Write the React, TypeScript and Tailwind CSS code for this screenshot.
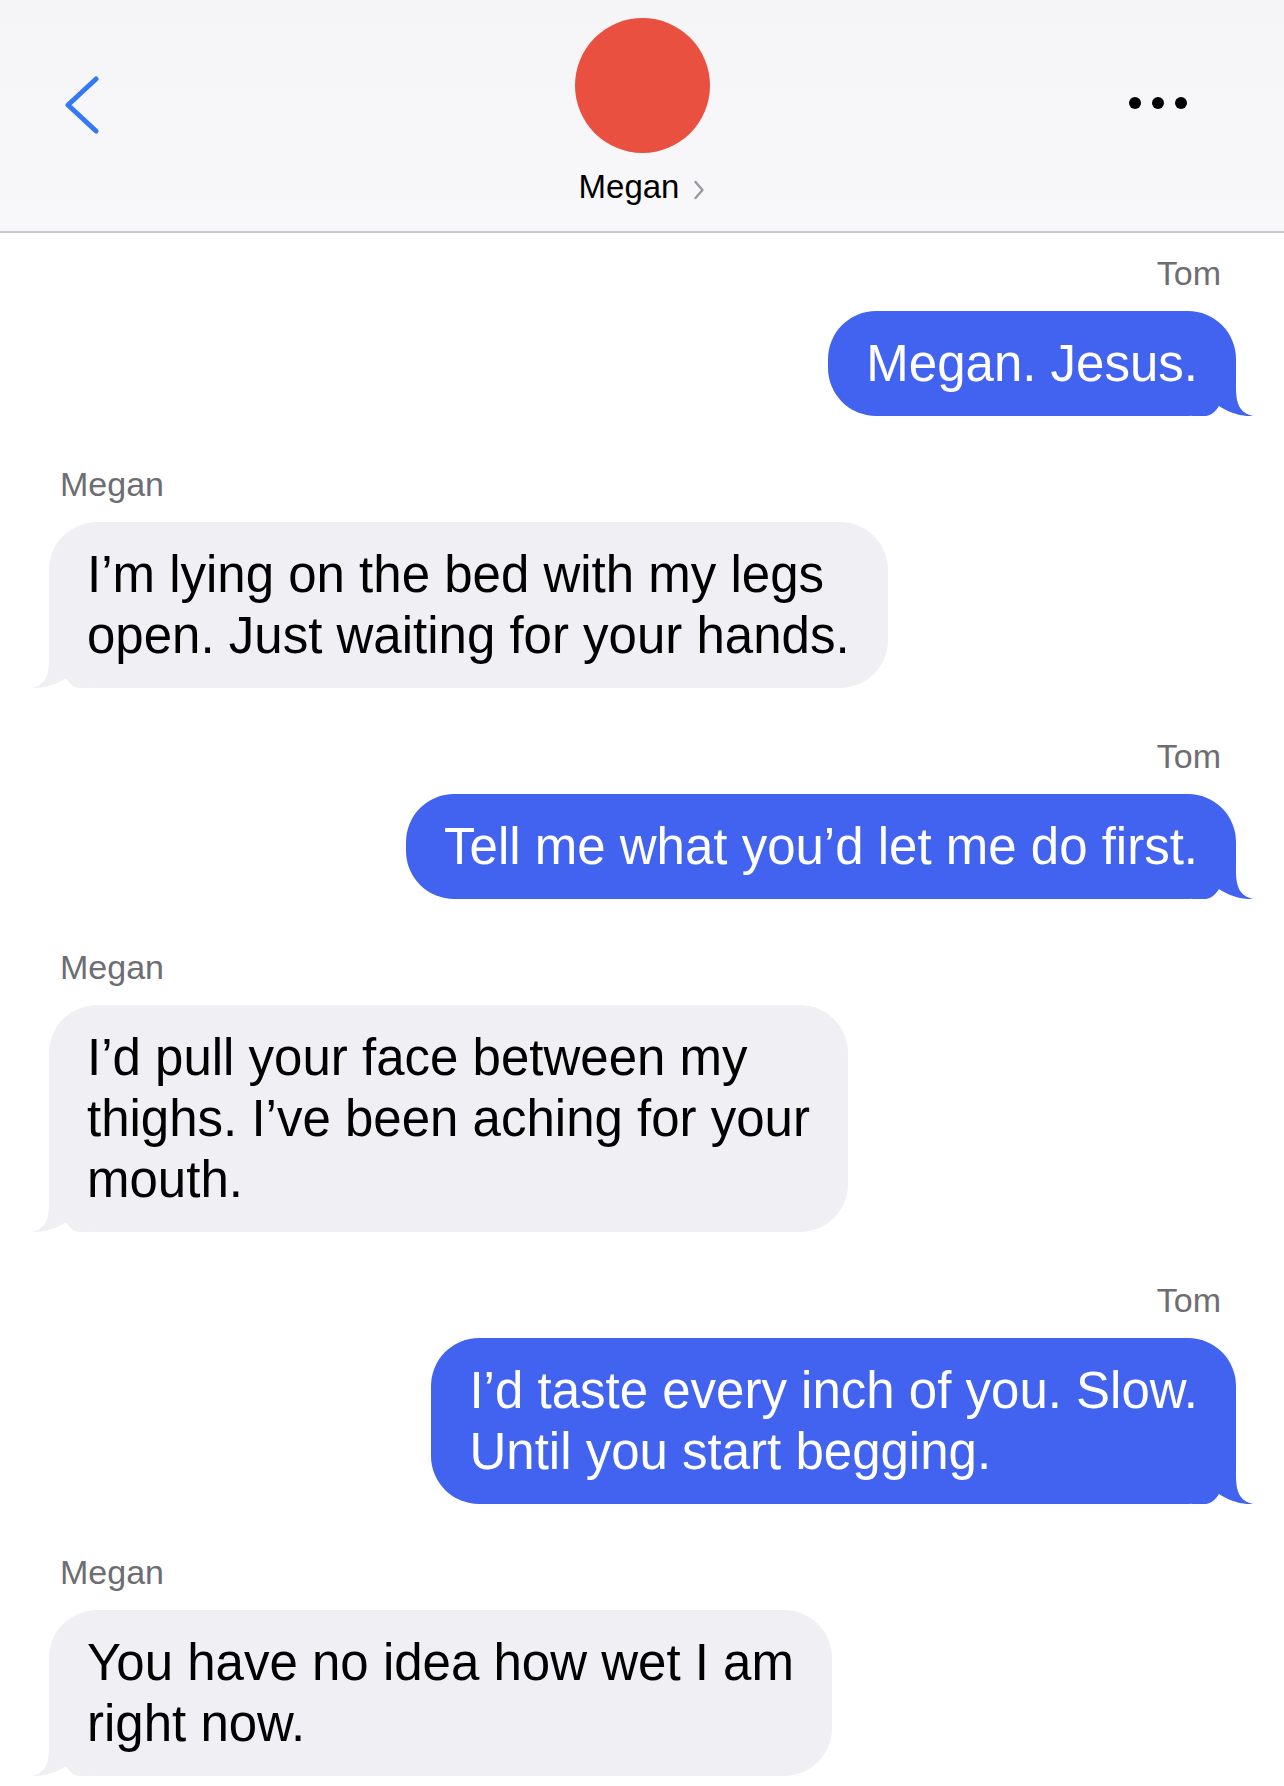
import React from 'react';

type Msg = { from: 'Tom' | 'Megan'; lines: string[] };

const MESSAGES: Msg[] = [
  { from: 'Tom', lines: ['Megan. Jesus.'] },
  { from: 'Megan', lines: ['I’m lying on the bed with my legs', 'open. Just waiting for your hands.'] },
  { from: 'Tom', lines: ['Tell me what you’d let me do first.'] },
  { from: 'Megan', lines: ['I’d pull your face between my', 'thighs. I’ve been aching for your', 'mouth.'] },
  { from: 'Tom', lines: ['I’d taste every inch of you. Slow.', 'Until you start begging.'] },
  { from: 'Megan', lines: ['You have no idea how wet I am', 'right now.'] },
];

const FONT = { fontFamily: '"Liberation Sans", Arial, sans-serif' };

// bubble tail, drawn over the bottom corner of the bubble
function Tail({ mine }: { mine: boolean }) {
  return (
    <svg
      width="64"
      height="50"
      viewBox="0 0 64 50"
      className={
        mine
          ? 'absolute bottom-0 right-[-20px] block'
          : 'absolute bottom-0 left-[-20px] block -scale-x-100'
      }
    >
      <path
        d="M0 50 L0 0 L44 0 L44 22 C44 38 48 47 61 50 C52 51 37 47 27 40 C24 45 20 49 14 50 Z"
        fill={mine ? '#4262f0' : '#f0f0f4'}
      />
    </svg>
  );
}

function Bubble({ msg }: { msg: Msg }) {
  const mine = msg.from === 'Tom';
  return (
    <div className={mine ? 'flex flex-col items-end' : 'flex flex-col items-start'}>
      <div className={mine ? 'pr-[15px] text-[34px] leading-[40px] text-[#6d6d72]' : 'pl-[11px] text-[34px] leading-[40px] text-[#6d6d72]'}>
        {msg.from}
      </div>
      <div
        className={
          mine
            ? 'relative mt-[18px] rounded-[48px] bg-[#4262f0] px-[38px] py-[22px] text-white'
            : 'relative mt-[18px] rounded-[48px] bg-[#f0f0f4] px-[38px] py-[22px] text-black'
        }
      >
        <Tail mine={mine} />
        <div className="relative whitespace-nowrap text-[51px] leading-[61px]">
          {msg.lines.map((l, i) => (
            <div key={i}>{l}</div>
          ))}
        </div>
      </div>
    </div>
  );
}

export default function App() {
  return (
    <div className="h-[1786px] w-[1284px] overflow-hidden bg-white" style={FONT}>
      <header className="grid h-[233px] grid-cols-[1fr_auto_1fr] border-b-2 border-[#c9c9cc] bg-gradient-to-b from-[#f5f5f7] to-[#f8f8fa]">
        <div className="pl-[63px] pt-[76px]">
          <svg width="36" height="58" viewBox="0 0 36 58" className="block">
            <path d="M33 3 L5 29 L33 55" fill="none" stroke="#3478f6" strokeWidth="5" strokeLinecap="round" strokeLinejoin="round" />
          </svg>
        </div>
        <div className="flex flex-col items-center pt-[18px]">
          <div className="h-[135px] w-[135px] rounded-full bg-[#e9503f]" />
          <div className="mt-[16px] flex items-center gap-[14px] text-[33px] leading-[36px] text-black">
            <span>Megan</span>
            <svg width="12" height="20" viewBox="0 0 12 20" className="mt-[6px] block">
              <path d="M2.5 2 L9.5 10 L2.5 18" fill="none" stroke="#98989d" strokeWidth="2.4" strokeLinecap="round" strokeLinejoin="round" />
            </svg>
          </div>
        </div>
        <div className="flex justify-end gap-[11px] pr-[97px] pt-[97px]">
          <span className="h-[12px] w-[12px] rounded-full bg-black" />
          <span className="h-[12px] w-[12px] rounded-full bg-black" />
          <span className="h-[12px] w-[12px] rounded-full bg-black" />
        </div>
      </header>
      <main className="flex flex-col gap-[48px] pl-[49px] pr-[48px] pt-[20px]">
        {MESSAGES.map((m, i) => (
          <Bubble key={i} msg={m} />
        ))}
      </main>
    </div>
  );
}
